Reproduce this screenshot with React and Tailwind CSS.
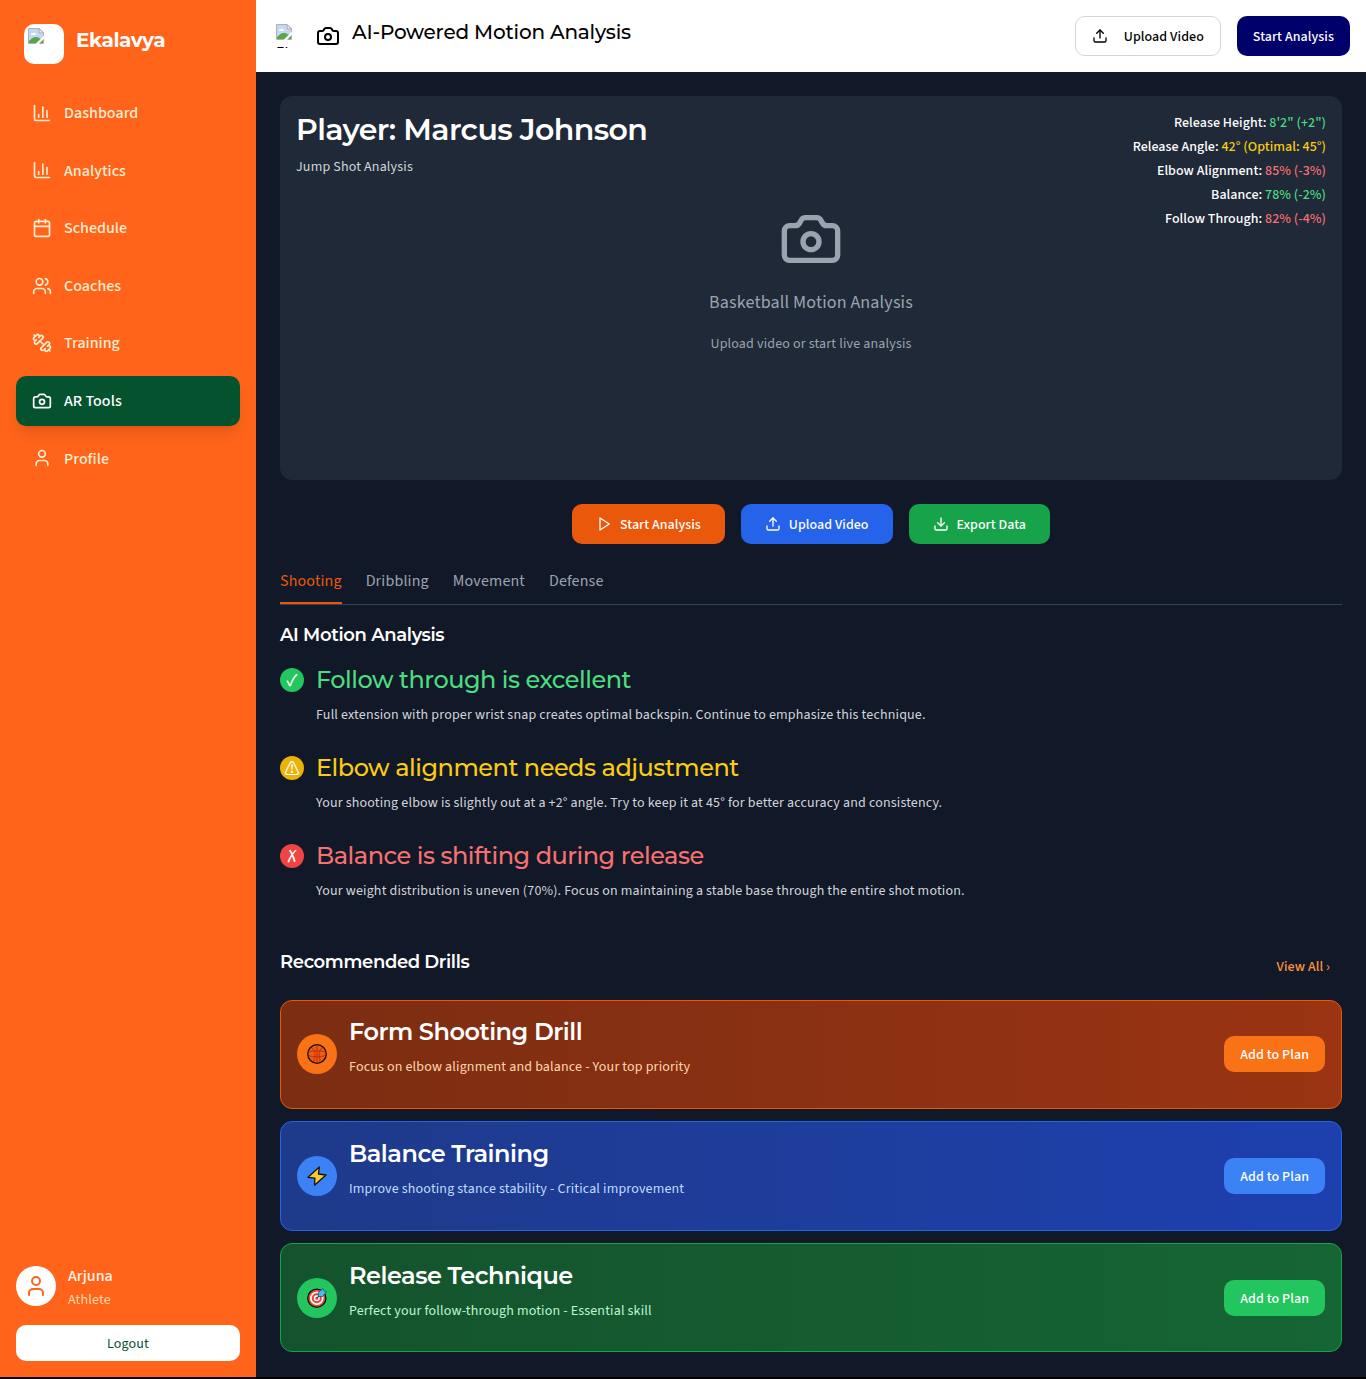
import React from "react";
import {
  ChartColumn,
  Calendar,
  Users,
  Dumbbell,
  Camera,
  User,
  Upload,
  Download,
} from "lucide-react";

const NAV = [
  { label: "Dashboard", icon: ChartColumn, iconClass: "size-5" },
  { label: "Analytics", icon: ChartColumn, iconClass: "size-5" },
  { label: "Schedule", icon: Calendar, iconClass: "size-5" },
  { label: "Coaches", icon: Users, iconClass: "size-5" },
  { label: "Training", icon: Dumbbell, iconClass: "size-5 -scale-x-100" },
  { label: "AR Tools", icon: Camera, iconClass: "size-5", active: true },
  { label: "Profile", icon: User, iconClass: "size-5" },
];

const METRICS = [
  { label: "Release Height:", value: "8'2\" (+2\")", tone: "text-[#4ade80]" },
  { label: "Release Angle:", value: "42° (Optimal: 45°)", tone: "text-[#facc15]" },
  { label: "Elbow Alignment:", value: "85% (-3%)", tone: "text-[#f87171]" },
  { label: "Balance:", value: "78% (-2%)", tone: "text-[#4ade80]" },
  { label: "Follow Through:", value: "82% (-4%)", tone: "text-[#f87171]" },
];

const FEEDBACK = [
  {
    mark: "✓",
    badge: "bg-[#22c55e] pt-0.5 text-lg",
    tone: "text-[#4ade80]",
    title: "Follow through is excellent",
    text: "Full extension with proper wrist snap creates optimal backspin. Continue to emphasize this technique.",
  },
  {
    mark: "⚠",
    badge: "bg-[#eab308] pt-[3px] text-[15px]",
    tone: "text-[#facc15]",
    title: "Elbow alignment needs adjustment",
    text: "Your shooting elbow is slightly out at a +2° angle. Try to keep it at 45° for better accuracy and consistency.",
  },
  {
    mark: "✗",
    badge: "bg-[#ef4444] pt-0.5 text-lg",
    tone: "text-[#f87171]",
    title: "Balance is shifting during release",
    text: "Your weight distribution is uneven (70%). Focus on maintaining a stable base through the entire shot motion.",
  },
];

function BasketballIcon() {
  return (
    <svg viewBox="0 0 20 20" className="size-5" fill="none">
      <circle cx="10" cy="10" r="9.3" fill="#ec5f0d" />
      <path
        d="M10 1v18M1.500 11.500c4 1.800 13 1.800 17 0M4 3.500c3.500 1.500 4.500 5.500 3.500 9.500-.4 1.600-.5 3.500-.5 5.500M16 3.500c-3.500 1.500-4.500 5.500-3.500 9.500.4 1.600.5 3.500.5 5.500M1.500 8c2.500-.8 5-1 8.500-1s6 .2 8.500 1"
        stroke="#c4260f"
        strokeWidth=".9"
      />
      <circle cx="10" cy="10" r="9.3" stroke="#111" strokeWidth="1.3" />
    </svg>
  );
}

function BoltIcon() {
  return (
    <svg viewBox="0 0 20 20" className="size-5" fill="none">
      <path
        d="M12.300.9 1 11.300l6.900.9-.4 7L19 9l-7.500-1z"
        fill="#fcc934"
        stroke="#111"
        strokeWidth="1.300"
        strokeLinejoin="round"
      />
    </svg>
  );
}

function TargetIcon() {
  return (
    <svg viewBox="0 0 20 20" className="size-5" fill="none">
      <circle cx="9.800" cy="10.200" r="9.100" fill="#e8432e" stroke="#111" strokeWidth="1.300" />
      <circle cx="9.800" cy="10.200" r="5.900" stroke="#fff" strokeWidth="1.800" />
      <circle cx="9.800" cy="10.200" r="2.300" stroke="#fff" strokeWidth="1.500" />
      <path d="m9.800 10.200 4-4" stroke="#16506e" strokeWidth="1.200" />
      <path
        d="m11.500 8.500-.2-4L16 .6l.8 2.200 2.700.8-3.700 4.900z"
        fill="#4db8ea"
        stroke="#174a66"
        strokeWidth=".7"
        strokeLinejoin="round"
      />
    </svg>
  );
}

function PlayIcon() {
  return (
    <svg
      viewBox="0 0 24 24"
      className="size-4"
      fill="none"
      stroke="currentColor"
      strokeWidth="2"
      strokeLinecap="round"
      strokeLinejoin="round"
    >
      <polygon points="6 3 20 12 6 21 6 3" />
    </svg>
  );
}

const DRILLS = [
  {
    icon: BasketballIcon,
    title: "Form Shooting Drill",
    text: "Focus on elbow alignment and balance - Your top priority",
    card: "from-[#7c2d12] to-[#9a3412] border-[#ea580c]",
    badge: "bg-[#f97316]",
    tone: "text-[#fed7aa]",
  },
  {
    icon: BoltIcon,
    title: "Balance Training",
    text: "Improve shooting stance stability - Critical improvement",
    card: "from-[#1e3a8a] to-[#1e40af] border-[#2563eb]",
    badge: "bg-[#3b82f6]",
    tone: "text-[#bfdbfe]",
  },
  {
    icon: TargetIcon,
    title: "Release Technique",
    text: "Perfect your follow-through motion - Essential skill",
    card: "from-[#14532d] to-[#166534] border-[#16a34a]",
    badge: "bg-[#22c55e]",
    tone: "text-[#bbf7d0]",
  },
];

function BrokenImage() {
  return (
    <svg viewBox="0 0 16 16" className="block size-4 shrink-0" fill="none">
      <path d="M.5.5H11L15.500 5v10.500H.5z" fill="#fff" stroke="#b0b0b0" />
      <path d="M1 1h9.500v4.500H15V15H1z" fill="#c5d7f7" />
      <path d="M3 7c-.3-1.200 1-2 2-1.500.6-1.200 2.400-.9 2.500.3 1 .1 1 1.200.2 1.200z" fill="#fff" />
      <path d="M1 15v-2c2.500-2.800 5-4.500 8-4 2 .5 3 1.500 6 3V15z" fill="#58a84a" />
      <path d="M11 .5V5h4.500z" fill="#f4f4f4" stroke="#a0a0a0" />
      <path d="M16 7.500 7.500 16h3.300L16 10.800z" fill="#fff" />
    </svg>
  );
}

function Sidebar() {
  return (
    <aside className="flex w-64 shrink-0 flex-col bg-[#ff641a]">
      <div className="flex gap-3 px-6 pt-6">
        <div className="size-10 rounded-[10px] bg-white p-1">
          <BrokenImage />
        </div>
        <span className="font-['Montserrat','Inter',sans-serif] text-xl leading-8 font-bold tracking-[-0.4px] text-white">
          Ekalavya
        </span>
      </div>
      <nav className="flex flex-col gap-2 px-4 pt-6 font-medium tracking-[0.003em]">
        {NAV.map(({ label, icon: Icon, iconClass, active }) => (
          <a
            key={label}
            className={
              active
                ? "flex h-[49.600px] items-center gap-3 rounded-[10px] bg-[#05522f] px-4 text-white shadow-lg"
                : "flex h-[49.600px] items-center gap-3 rounded-[10px] px-4 text-[#ffedd4]"
            }
          >
            <Icon className={iconClass} />
            <span className="pt-0.5">{label}</span>
          </a>
        ))}
      </nav>
      <div className="mt-auto px-4 pb-4">
        <div className="flex items-center gap-3">
          <div className="flex size-10 items-center justify-center rounded-full bg-white">
            <User className="size-6 text-[#ff641a]" />
          </div>
          <div className="pt-[3px]">
            <p className="leading-[25.600px] font-medium tracking-[0.003em] text-orange-50">Arjuna</p>
            <p className="text-sm leading-5 text-[#ffd6a7]">Athlete</p>
          </div>
        </div>
        <button className="mt-[15px] flex h-9 w-full items-center justify-center rounded-[10px] bg-white pt-0.5 text-sm text-[#05522f]">
          Logout
        </button>
      </div>
    </aside>
  );
}

function Header() {
  return (
    <header className="flex h-18 items-center justify-between bg-white pr-4 pl-5 text-black">
      <div className="flex h-6 items-start">
        <div className="mr-4 h-6 w-6 overflow-hidden text-base leading-[27px]">
          <BrokenImage />
          Ekalavya
        </div>
        <Camera className="size-6" />
        <h1 className="ml-3 font-['Montserrat','Inter',sans-serif] text-xl leading-4 font-medium tracking-[-0.2px]">
          AI-Powered Motion Analysis
        </h1>
      </div>
      <div className="flex gap-4 text-sm font-medium tracking-[0.005em]">
        <button className="flex h-10 items-center gap-4 rounded-[10px] border border-gray-300 px-4">
          <Upload className="size-4" />
          <span className="pt-0.5">Upload Video</span>
        </button>
        <button className="h-10 rounded-[10px] bg-[#00006b] px-4 pt-0.5 text-white">Start Analysis</button>
      </div>
    </header>
  );
}

function PlayerCard() {
  return (
    <section className="relative flex h-96 flex-col items-center rounded-xl bg-[#1f2937] pt-[111px]">
      <Camera className="size-16 text-[#9ca3af]" />
      <p className="mt-4 text-lg leading-8 text-[#9ca3af]">Basketball Motion Analysis</p>
      <p className="mt-[15px] text-sm leading-5 text-[#9ca3af]">Upload video or start live analysis</p>
      <div className="absolute top-4 left-4">
        <h2 className="font-['Montserrat','Inter',sans-serif] text-3xl leading-9 font-semibold tracking-[-0.6px]">
          Player: Marcus Johnson
        </h2>
        <p className="mt-[9px] text-sm text-[#d1d5db]">Jump Shot Analysis</p>
      </div>
      <div className="absolute top-[17px] right-4 flex flex-col gap-1 text-right text-sm font-medium tracking-[0.003em]">
        {METRICS.map((m) => (
          <p key={m.label}>
            {m.label} <span className={m.tone}>{m.value}</span>
          </p>
        ))}
      </div>
    </section>
  );
}

function Actions() {
  return (
    <div className="mt-6 flex justify-center gap-4 text-sm font-medium tracking-[0.003em]">
      <button className="flex h-10 items-center gap-2 rounded-[10px] bg-[#ea580c] px-6">
        <PlayIcon />
        <span className="pt-0.5">Start Analysis</span>
      </button>
      <button className="flex h-10 items-center gap-2 rounded-[10px] bg-[#2563eb] px-6">
        <Upload className="size-4" />
        <span className="pt-0.5">Upload Video</span>
      </button>
      <button className="flex h-10 items-center gap-2 rounded-[10px] bg-[#16a34a] px-6">
        <Download className="size-4" />
        <span className="pt-0.5">Export Data</span>
      </button>
    </div>
  );
}

function Tabs() {
  return (
    <div className="mt-6 flex h-[37px] gap-6 border-b border-[#374151] tracking-[0.009em] text-[#9ca3af]">
      <span className="h-9 border-b-2 border-[#ea580c] pt-px text-[#ea580c]">Shooting</span>
      <span className="pt-px">Dribbling</span>
      <span className="pt-px">Movement</span>
      <span className="pt-px">Defense</span>
    </div>
  );
}

export default function App() {
  return (
    <div className="bg-black pb-0.5 font-['Source_Sans_3','Noto_Sans_CJK_SC',sans-serif] text-base leading-[25.600px] tracking-[0.01em] text-white">
      <div className="flex h-[1377px]">
        <Sidebar />
        <div className="flex min-w-0 flex-1 flex-col bg-[#111827]">
          <Header />
          <main className="flex flex-col p-6">
            <PlayerCard />
            <Actions />
            <Tabs />
            <h3 className="mt-4 font-['Montserrat','Inter',sans-serif] text-lg leading-7 font-semibold tracking-[-0.36px]">
              AI Motion Analysis
            </h3>
            <div className="mt-[15px] flex flex-col gap-6">
              {FEEDBACK.map((f) => (
                <div key={f.title} className="flex h-16 items-start gap-3">
                  <span
                    className={`mt-1 flex size-6 items-center justify-center rounded-full font-medium ${f.badge}`}
                  >
                    {f.mark}
                  </span>
                  <div>
                    <h4
                      className={`font-['Montserrat','Inter',sans-serif] text-2xl leading-8 font-medium tracking-[-0.48px] ${f.tone}`}
                    >
                      {f.title}
                    </h4>
                    <p className="mt-[9px] text-sm text-[#d1d5db]">{f.text}</p>
                  </div>
                </div>
              ))}
            </div>
            <div className="mt-11 flex h-9 items-center justify-between">
              <h3 className="pb-2 font-['Montserrat','Inter',sans-serif] text-lg font-semibold tracking-[-0.36px]">
                Recommended Drills
              </h3>
              <button className="px-3 pt-px text-sm font-medium tracking-[0.005em] text-[#fb923c]">
                View All ›
              </button>
            </div>
            <div className="mt-[15.700px] flex flex-col gap-3">
              {DRILLS.map(({ icon: Icon, ...d }) => (
                <article
                  key={d.title}
                  className={`flex h-[109.600px] items-center rounded-xl border bg-linear-to-r px-4 ${d.card}`}
                >
                  <div className={`flex size-10 items-center justify-center rounded-full ${d.badge}`}>
                    <Icon />
                  </div>
                  <div className="ml-3 h-[76px]">
                    <h4 className="font-['Montserrat','Inter',sans-serif] text-2xl leading-8 font-semibold tracking-[-0.48px]">
                      {d.title}
                    </h4>
                    <p className={`mt-[9px] text-sm ${d.tone}`}>{d.text}</p>
                  </div>
                  <button
                    className={`ml-auto h-9 rounded-[10px] px-4 pt-0.5 text-sm font-medium tracking-[0.005em] ${d.badge}`}
                  >
                    Add to Plan
                  </button>
                </article>
              ))}
            </div>
          </main>
        </div>
      </div>
    </div>
  );
}
